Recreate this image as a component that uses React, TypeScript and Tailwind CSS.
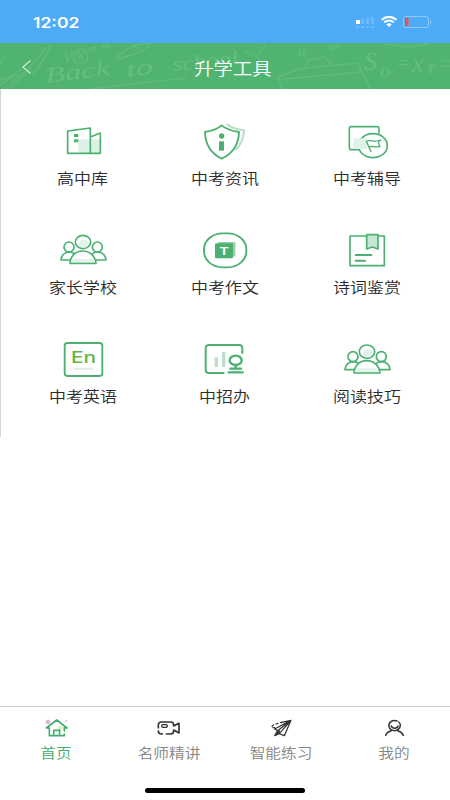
import type { ReactNode } from 'react';

const G = '#4bb071';

function ToolIcon({ viewBox, children }: { viewBox: string; children: ReactNode }) {
  return (
    <svg viewBox={viewBox} className="h-10 w-12" fill="none" stroke={G} strokeWidth="5.500" strokeLinecap="round" strokeLinejoin="round">
      {children}
    </svg>
  );
}

function People({ viewBox }: { viewBox: string }) {
  return (
    <ToolIcon viewBox={viewBox}>
      <g strokeWidth="5">
        <circle cx="87" cy="66" r="15" />
        <circle cx="172" cy="66" r="15" />
        <path d="M92 105H63c1-14 11-24 25-24 7 0 12 2 17 6M167 105h31c-1-14-11-24-25-24-8 0-14 3-19 8" />
        <ellipse cx="129" cy="51" rx="23" ry="20" fill="#fff" />
        <ellipse cx="131" cy="56" rx="15" ry="12" fill="#e3f3ea" stroke="none" />
        <path d="M90 115c1-22 17-37 38-37s38 15 40 37z" fill="#fff" />
        <path d="M97 101h62l4 11H95z" fill="#e3f3ea" stroke="none" />
      </g>
    </ToolIcon>
  );
}

const tools: { name: string; icon: ReactNode }[] = [
  {
    name: '高中库',
    icon: (
      <ToolIcon viewBox="57 18 144 120">
        <path d="M115 73h67v42h-67z" fill="#dcf1e5" stroke="none" />
        <path d="M83 115V48l68-9v76zM151 66l30-12v61h-30" strokeWidth="5" />
        <path d="M102 57h13v9h-13zM102 73h13v9h-13z" fill={G} stroke="none" />
      </ToolIcon>
    ),
  },
  {
    name: '中考资讯',
    icon: (
      <ToolIcon viewBox="63 18 144 120">
        <path d="M142 29c14 10 30 15 50 17-2 27-9 43-24 58" stroke="#b5dfc6" strokeWidth="6" />
        <path d="M125 31c13 11 30 17 52 20-1 40-18 64-52 80-33-16-49-40-50-80 21-3 37-9 50-20z" fill="#fff" />
        <circle cx="125" cy="63" r="8" fill={G} stroke="none" />
        <path d="M117 79h15v28h-15z" fill={G} stroke="none" />
      </ToolIcon>
    ),
  },
  {
    name: '中考辅导',
    icon: (
      <ToolIcon viewBox="54 18 144 120">
        <g strokeWidth="4.800">
          <path d="M101 104H79q-6 0-6-6V41q0-6 6-6h77q6 0 6 6v14" />
          <ellipse cx="144" cy="92" rx="43" ry="36" fill="#fff" />
          <path d="M85 70h42v32h-42z" fill="#dff2e7" stroke="none" />
          <path d="M138 110l-14-31c14-7 23 5 43-4-8 6-9 11-2 19-12 5-22-3-34 2" strokeWidth="4" />
        </g>
      </ToolIcon>
    ),
  },
  { name: '家长学校', icon: <People viewBox="57 15 144 120" /> },
  {
    name: '中考作文',
    icon: (
      <ToolIcon viewBox="63 15 144 120">
        <rect x="72" y="25" width="127" height="102" rx="56" ry="48" strokeWidth="5.500" />
        <path d="M114 51h52v43h-52z" fill="#95d0ac" stroke="none" />
        <rect x="105" y="55" width="54" height="45" rx="4" fill={G} stroke="none" />
        <text x="132.500" y="90" textAnchor="middle" className="font-['Inter',sans-serif] font-semibold" fontSize="33" textLength="29" lengthAdjust="spacingAndGlyphs" fill="#fff" stroke="none">T</text>
      </ToolIcon>
    ),
  },
  {
    name: '诗词鉴赏',
    icon: (
      <ToolIcon viewBox="54 15 144 120">
        <rect x="75" y="33" width="103" height="89" strokeWidth="5" />
        <path d="M125 29h34v43l-17-6-17 6z" fill="#c5e7d3" strokeWidth="5" />
        <path d="M92 90h47M92 107h28" strokeWidth="6" />
      </ToolIcon>
    ),
  },
  {
    name: '中考英语',
    icon: (
      <ToolIcon viewBox="57 12 144 120">
        <rect x="74" y="24" width="113" height="99" rx="8" />
        <text x="93" y="84" className="font-['Inter',sans-serif] font-medium" fontSize="48" textLength="75" lengthAdjust="spacingAndGlyphs" fill="#60b548" stroke="none">En</text>
        <path d="M99 101h61" stroke="#dcefe4" strokeWidth="6" strokeLinecap="butt" />
      </ToolIcon>
    ),
  },
  {
    name: '中招办',
    icon: (
      <ToolIcon viewBox="63 12 144 120">
        <path d="M131 114H88q-11 0-11-10V40q0-10 11-10h89q10 0 10 10v14" strokeWidth="6" />
        <path d="M109 67v29M131 51v45" stroke="#b9e0c9" strokeWidth="10" strokeLinecap="butt" />
        <ellipse cx="167" cy="76" rx="18" ry="14" strokeWidth="7" />
        <path d="M167 90v10M151 101h32M146 112h42" strokeWidth="7" />
      </ToolIcon>
    ),
  },
  { name: '阅读技巧', icon: <People viewBox="57 13 144 120" /> },
];

const tabs: { name: string; active?: boolean; icon: ReactNode }[] = [
  {
    name: '首页',
    active: true,
    icon: (
      <svg viewBox="132 54 72 60" className="h-5 w-6" fill="none" stroke="#3fae6d" strokeWidth="4.800" strokeLinecap="round" strokeLinejoin="round">
        <circle cx="144" cy="66" r="7" fill="#dfb5cf" stroke="none" />
        <circle cx="198" cy="64" r="3" fill="#efbccd" stroke="none" />
        <circle cx="181" cy="84" r="7" fill="#d9efb5" stroke="none" />
        <path d="M148 84h-9l31-24 31 24h-9M148 84v23h33M193 84v9M193 102v5h-8M161 106V91h18v15" />
      </svg>
    ),
  },
  {
    name: '名师精讲',
    icon: (
      <svg viewBox="471 54 72 60" className="h-5 w-6" fill="none" stroke="#333" strokeWidth="5" strokeLinecap="round" strokeLinejoin="round">
        <path d="M475 83V75q0-9 9-9h28q9 0 9 9v3l16-8v29l-16-9v3q0 9-9 9h-13M475 93q0 9 9 9h3" />
        <rect x="485" y="74" width="17" height="8" rx="4" strokeWidth="4" />
      </svg>
    ),
  },
  {
    name: '智能练习',
    icon: (
      <svg viewBox="132 54 72 60" className="h-5 w-6" fill="none" stroke="#333" strokeWidth="3.800" strokeLinecap="round" strokeLinejoin="round">
        <path d="M198 61l-49 26 9 5-9 15 14-6 15 6 20-46-40 31M198 61l-35 40v-8M149 107l14-13M198 61l-32 7M159 70l-6 2M145 75l-4 4M144 83l5 0" />
      </svg>
    ),
  },
  {
    name: '我的',
    icon: (
      <svg viewBox="468 54 72 60" className="h-5 w-6" fill="none" stroke="#333" strokeWidth="4.500" strokeLinecap="round">
        <path d="M513 63c-15-5-26 5-24 16 2 9 9 13 17 13s17-7 17-16c0-5-2-8-5-10M496 78c3 9 17 9 20 0M479 106c3-8 9-12 17-14M515 92c8 2 14 7 17 14" />
      </svg>
    ),
  },
];

function Doodles() {
  return (
    <svg viewBox="0 0 450 46" className="absolute inset-0 h-full w-full" fill="none" stroke="#7bc995" strokeOpacity="0.38" strokeWidth="1.400" strokeLinecap="round" strokeLinejoin="round">
      <path d="M0 21l5-9M1 42l25-20 5 4-21 18M12 39l16-13M30 24L45 6l5-3-3 8-14 21M39 25l8-14" />
      <path d="M74 11l8-6 6 5-1 8-9 3-4-4zM78 9l5 7M86 8l-8 7M92 5c-4 0-4 4 0 3 5-1 5-6 0-3M107 2c-6-2-6 4-2 3l3-3 2 3M334 2c-6 0-6 5-1 4l4-5 3 5" />
      <path d="M115 14l20-12 17-2-11 9-23 7zM134 2l5 5M118 12l3 4" />
      <path d="M92 46c32-5 58-7 94-11M0 37l18-5M245 8l11 6 10-13M257 14l5 6" />
      <path d="M282 46l-4-12 20-8 60-6 12 25M282 36l80-7M305 25l3-8 16-3 8 7M384 1l25 3 20-3" />
      <g className="font-['Liberation_Serif',serif] italic" fill="#7bc995" fillOpacity="0.5" stroke="none">
        <text x="63" y="19" fontSize="15">V</text>
        <text transform="translate(46 40) rotate(-7)" fontSize="22" textLength="65" lengthAdjust="spacingAndGlyphs">Back</text>
        <text transform="translate(127 34) rotate(-8)" fontSize="22" textLength="27" lengthAdjust="spacingAndGlyphs">to</text>
        <text transform="translate(173 28) rotate(-6)" fontSize="20" textLength="66" lengthAdjust="spacingAndGlyphs">school</text>
        <text x="298" y="13" fontSize="15">α</text>
        <text x="364" y="27" fontSize="26">S</text>
        <text x="380" y="35" fontSize="20">o</text>
        <text x="396" y="27" fontSize="20">=</text>
        <text x="412" y="29" fontSize="26">x</text>
        <text x="428" y="31" fontSize="20">r</text>
      </g>
      <path d="M443 18h7M443 23h7" />
    </svg>
  );
}

export default function App() {
  return (
    <div className="relative flex h-[800px] w-[450px] flex-col overflow-hidden bg-white font-['Noto_Sans_CJK_SC',sans-serif]">
      <div className="flex h-[43px] shrink-0 items-center justify-between bg-[#4eabf8] pl-[33px] pr-4">
        <span className="origin-left scale-x-[1.17] pt-[2px] font-['Inter',sans-serif] text-[15px] font-semibold leading-5 text-white">12:02</span>
        <svg viewBox="354 10 80 24" className="h-6 w-20" fill="none">
          <path d="M356 20h4v4h-4z" fill="#fff" />
          <path d="M361 19h3v5h-3zM366 18h3v6h-3zM371 17h3v7h-3zM356 26h3v2h-3zM361 26h3v2h-3zM366 26h3v2h-3zM371 26h3v2h-3z" fill="#6fbafa" />
          <path d="M381.500 19.800Q389 14 396.500 19.800M384.200 22.300Q389 18.700 393.800 22.300" stroke="#fff" strokeWidth="2" />
          <path d="M386.300 24.300Q389 22.300 391.700 24.300L389 27z" fill="#fff" />
          <rect x="403.500" y="16.500" width="25" height="11" rx="2.500" stroke="#8fc9f9" />
          <path d="M405 18h3.500v8H405z" fill="#eb5148" />
          <path d="M430 20q2 2 0 4z" fill="#a9d7fb" />
        </svg>
      </div>

      <header className="relative flex h-[46px] shrink-0 items-center justify-center bg-[#50b36f]">
        <Doodles />
        <svg viewBox="0 0 10 14" className="absolute left-[22px] top-[17px] h-[14px] w-[10px]" fill="none" stroke="#d5eedd" strokeWidth="1.100">
          <path d="M8.500 .5L.8 7l7.700 6.500" />
        </svg>
        <h1 className="relative scale-x-[1.14] pl-[13px] pt-[3px] text-[17px] font-[350] leading-6 text-white">升学工具</h1>
      </header>

      <main className="flex-1">
        <div className="grid h-[348px] grid-cols-3 content-start border-l border-[#d6d6d6] pl-[11px] pr-3 pt-8">
          {tools.map((tool) => (
            <div key={tool.name} className="flex h-[109px] flex-col items-center">
              {tool.icon}
              <span className="mt-[6px] scale-x-[1.13] whitespace-nowrap text-[15px] font-[350] leading-[22px] text-[#2b2b2b]">{tool.name}</span>
            </div>
          ))}
        </div>
      </main>

      <nav className="flex h-[94px] shrink-0 flex-col items-center border-t border-[#c9c9c9]">
        <div className="grid w-full grid-cols-4 pt-[11px]">
          {tabs.map((tab) => (
            <div key={tab.name} className="flex flex-col items-center">
              {tab.icon}
              <span className={`mt-[4px] scale-x-[1.12] whitespace-nowrap text-[14px] font-[350] leading-5 ${tab.active ? 'text-[#3fae6d]' : 'text-[#858585]'}`}>{tab.name}</span>
            </div>
          ))}
        </div>
        <div className="mt-[26px] h-[5px] w-40 rounded-full bg-black" />
      </nav>
    </div>
  );
}
